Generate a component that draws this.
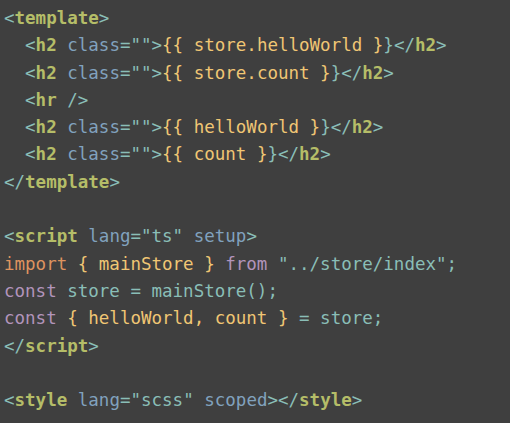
import React from 'react';

type Tok = [string, string];

const C = {
  punct: 'text-[#8abeb7]',
  tag: 'text-[#b5bd68] font-bold',
  attr: 'text-[#81a2be]',
  str: 'text-[#8abeb7]',
  mus: 'text-[#f0c674]',
  kw: 'text-[#de935f]',
  kw2: 'text-[#b294bb]',
  plain: 'text-[#8abeb7]',
};

const h2 = (inner: string): Tok[] => [
  ['  <', C.punct],
  ['h2', C.tag],
  [' ', C.plain],
  ['class', C.attr],
  ['=""', C.punct],
  ['>', C.punct],
  [`{{ ${inner} }`, C.mus],
  ['}</', C.punct],
  ['h2', C.tag],
  ['>', C.punct],
];

const lines: Tok[][] = [
  [['<', C.punct], ['template', C.tag], ['>', C.punct]],
  h2('store.helloWorld'),
  h2('store.count'),
  [['  <', C.punct], ['hr', C.tag], [' />', C.punct]],
  h2('helloWorld'),
  h2('count'),
  [['</', C.punct], ['template', C.tag], ['>', C.punct]],
  [],
  [
    ['<', C.punct],
    ['script', C.tag],
    [' ', C.plain],
    ['lang', C.attr],
    ['="ts" ', C.str],
    ['setup', C.attr],
    ['>', C.punct],
  ],
  [
    ['import', C.kw],
    [' { mainStore } ', C.mus],
    ['from', C.kw2],
    [' "../store/index";', C.str],
  ],
  [['const', C.kw2], [' store = mainStore();', C.plain]],
  [['const', C.kw2], [' { helloWorld, count }', C.mus], [' = store;', C.plain]],
  [['</', C.punct], ['script', C.tag], ['>', C.punct]],
  [],
  [
    ['<', C.punct],
    ['style', C.tag],
    [' ', C.plain],
    ['lang', C.attr],
    ['="scss" ', C.str],
    ['scoped', C.attr],
    ['></', C.punct],
    ['style', C.tag],
    ['>', C.punct],
  ],
];

export default function App() {
  return (
    <div className="w-[510px] h-[423px] bg-[#3f3f3f] overflow-hidden pl-[4px] pt-[5px]">
      <pre className="font-['DejaVu_Sans_Mono',monospace] text-[17.5px] leading-[27.3px] whitespace-pre">
        {lines.map((line, i) => (
          <div key={i} className="h-[27.3px]">
            {line.map(([t, c], j) => (
              <span key={j} className={c}>
                {t}
              </span>
            ))}
          </div>
        ))}
      </pre>
    </div>
  );
}
